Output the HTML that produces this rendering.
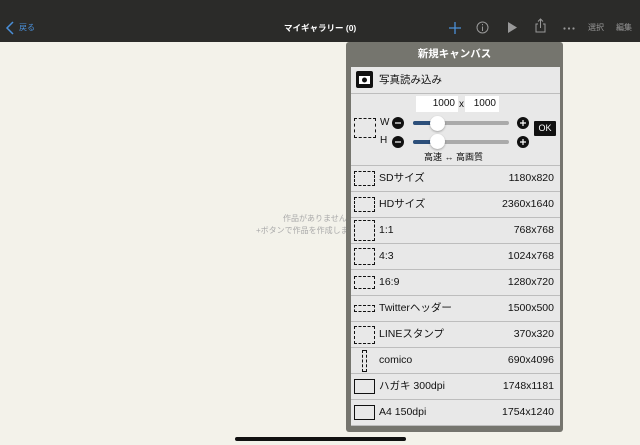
<!DOCTYPE html><html><head><meta charset="utf-8"><style>
*{margin:0;padding:0;box-sizing:border-box}
body{width:640px;height:445px;background:#f3f2ea;font-family:"Liberation Sans","Noto Sans CJK JP",sans-serif;position:relative;overflow:hidden}
.top{position:absolute;left:0;top:0;width:640px;height:42px;background:#2b2b29}
.t{position:absolute;font-size:9px;white-space:nowrap;line-height:12px}
.pop{position:absolute;left:346px;top:42px;width:217px;height:390px;background:#75756e;border-radius:3px}
.list{position:absolute;left:5px;top:25px;width:209px;background:#e8e8e8}
.row{height:26px;border-bottom:1px solid #bdbdbd;position:relative;font-size:10.5px;color:#111}
.row .n{position:absolute;left:28px;top:0;line-height:25px;height:25px}
.row .v{position:absolute;right:6px;top:0;line-height:25px;height:25px}
.ic{position:absolute;border:1.3px dashed #111}
.circ{position:absolute;width:12px;height:12px}
.bar{position:absolute;height:4px;border-radius:2px;background:#aaa;width:96px}
.knob{position:absolute;width:15px;height:15px;border-radius:50%;background:#fff;box-shadow:0 1px 2px rgba(0,0,0,.3)}
</style></head><body>
<div class="top"></div>
<svg style="position:absolute;left:5px;top:21px" width="10" height="14"><path d="M8 1L2 7L8 13" stroke="#4a8fd8" stroke-width="1.5" fill="none"/></svg>
<div class="t" style="left:19px;top:22px;color:#4a8fd8;font-size:8px">戻る</div>
<div class="t" style="left:284px;top:22px;color:#fff;font-weight:bold;font-size:8.5px">マイギャラリー (0)</div>
<svg style="position:absolute;left:449px;top:22px" width="12" height="12"><path d="M6 0V12M0 6H12" stroke="#4a8fd8" stroke-width="1.3"/></svg>
<svg style="position:absolute;left:476px;top:21px" width="13" height="13"><circle cx="6.5" cy="6.5" r="5.5" stroke="#999" fill="none"/><path d="M6.5 5.5v4.5M6.5 3v1.3" stroke="#999"/></svg>
<svg style="position:absolute;left:507px;top:22px" width="11" height="11"><path d="M1 0L10 5.5L1 11Z" fill="#999"/></svg>
<svg style="position:absolute;left:535px;top:18px" width="11" height="15"><path d="M3 6H1V14H10V6H8M5.5 10V1M3 3.5L5.5 1L8 3.5" stroke="#999" fill="none"/></svg>
<svg style="position:absolute;left:563px;top:27px" width="12" height="3"><circle cx="1.5" cy="1.5" r="1.1" fill="#999"/><circle cx="6" cy="1.5" r="1.1" fill="#999"/><circle cx="10.5" cy="1.5" r="1.1" fill="#999"/></svg>
<div class="t" style="left:588px;top:22px;color:#999;font-size:8px">選択</div>
<div class="t" style="left:616px;top:22px;color:#999;font-size:8px">編集</div>
<div class="t" style="left:283px;top:213px;color:#aaa;font-size:8px">作品がありません。</div>
<div class="t" style="left:256px;top:225px;color:#aaa;font-size:8px">+ボタンで作品を作成します</div>
<div class="pop">
<div class="t" style="left:0;width:217px;text-align:center;top:6px;color:#fff;font-weight:bold;font-size:10.5px">新規キャンバス</div>
<div class="list">
<div class="row" style="height:27px"><div style="position:absolute;left:5px;top:4px;width:17px;height:17px;background:#111;border-radius:2px"><svg width="17" height="17"><rect x="3" y="5" width="11" height="8" fill="#fff"/><circle cx="8.5" cy="9" r="2.5" fill="#111"/></svg></div><span class="n" style="line-height:26px">写真読み込み</span></div>
<div class="row" style="height:72px">
<div style="position:absolute;left:65px;top:2px;width:42px;height:16px;background:#fff;font-size:10px;text-align:right;padding:0 3px;line-height:16px">1000</div>
<div class="t" style="left:108px;top:5px;font-size:10px">x</div>
<div style="position:absolute;left:114px;top:2px;width:34px;height:16px;background:#fff;font-size:10px;text-align:right;padding:0 3px;line-height:16px">1000</div>
<div class="ic" style="left:3px;top:24px;width:22px;height:20px"></div>
<div class="t" style="left:29px;top:23px;font-size:10px">W</div>
<svg class="circ" style="left:41px;top:23px"><circle cx="6" cy="6" r="6" fill="#111"/><path d="M3 6H9" stroke="#fff" stroke-width="1.2"/></svg>
<div class="bar" style="left:62px;top:27px"></div><div style="position:absolute;left:62px;top:27px;width:22px;height:4px;background:#2c4f7a;border-radius:2px"></div><div class="knob" style="left:79px;top:22px"></div>
<svg class="circ" style="left:166px;top:23px"><circle cx="6" cy="6" r="6" fill="#111"/><path d="M3 6H9M6 3V9" stroke="#fff" stroke-width="1.2"/></svg>
<div class="t" style="left:29px;top:41px;font-size:10px">H</div>
<svg class="circ" style="left:41px;top:42px"><circle cx="6" cy="6" r="6" fill="#111"/><path d="M3 6H9" stroke="#fff" stroke-width="1.2"/></svg>
<div class="bar" style="left:62px;top:46px"></div><div style="position:absolute;left:62px;top:46px;width:22px;height:4px;background:#2c4f7a;border-radius:2px"></div><div class="knob" style="left:79px;top:40px"></div>
<svg class="circ" style="left:166px;top:42px"><circle cx="6" cy="6" r="6" fill="#111"/><path d="M3 6H9M6 3V9" stroke="#fff" stroke-width="1.2"/></svg>
<div style="position:absolute;left:183px;top:27px;width:22px;height:15px;background:#111;color:#fff;font-size:9px;text-align:center;line-height:15px;border-radius:1px">OK</div>
<div class="t" style="left:73px;top:57px;font-size:9px">高速 ↔ 高画質</div>
</div>
<div class="row"><div class="ic" style="left:3px;top:5px;width:21px;height:15px"></div><span class="n">SDサイズ</span><span class="v">1180x820</span></div>
<div class="row"><div class="ic" style="left:3px;top:5px;width:21px;height:15px"></div><span class="n">HDサイズ</span><span class="v">2360x1640</span></div>
<div class="row"><div class="ic" style="left:3px;top:2px;width:21px;height:21px"></div><span class="n">1:1</span><span class="v">768x768</span></div>
<div class="row"><div class="ic" style="left:3px;top:4px;width:21px;height:17px"></div><span class="n">4:3</span><span class="v">1024x768</span></div>
<div class="row"><div class="ic" style="left:3px;top:6px;width:21px;height:13px"></div><span class="n">16:9</span><span class="v">1280x720</span></div>
<div class="row"><div class="ic" style="left:3px;top:9px;width:21px;height:7px"></div><span class="n">Twitterヘッダー</span><span class="v">1500x500</span></div>
<div class="row"><div class="ic" style="left:3px;top:4px;width:21px;height:18px"></div><span class="n">LINEスタンプ</span><span class="v">370x320</span></div>
<div class="row"><div class="ic" style="left:11px;top:2px;width:5px;height:22px"></div><span class="n">comico</span><span class="v">690x4096</span></div>
<div class="row"><div style="position:absolute;left:3px;top:5px;width:21px;height:15px;border:1.3px solid #111"></div><span class="n">ハガキ 300dpi</span><span class="v">1748x1181</span></div>
<div class="row"><div style="position:absolute;left:3px;top:5px;width:21px;height:15px;border:1.3px solid #111"></div><span class="n">A4 150dpi</span><span class="v">1754x1240</span></div>
</div></div>
<div style="position:absolute;left:235px;top:437px;width:171px;height:4px;border-radius:2px;background:#111"></div>
</body></html>
